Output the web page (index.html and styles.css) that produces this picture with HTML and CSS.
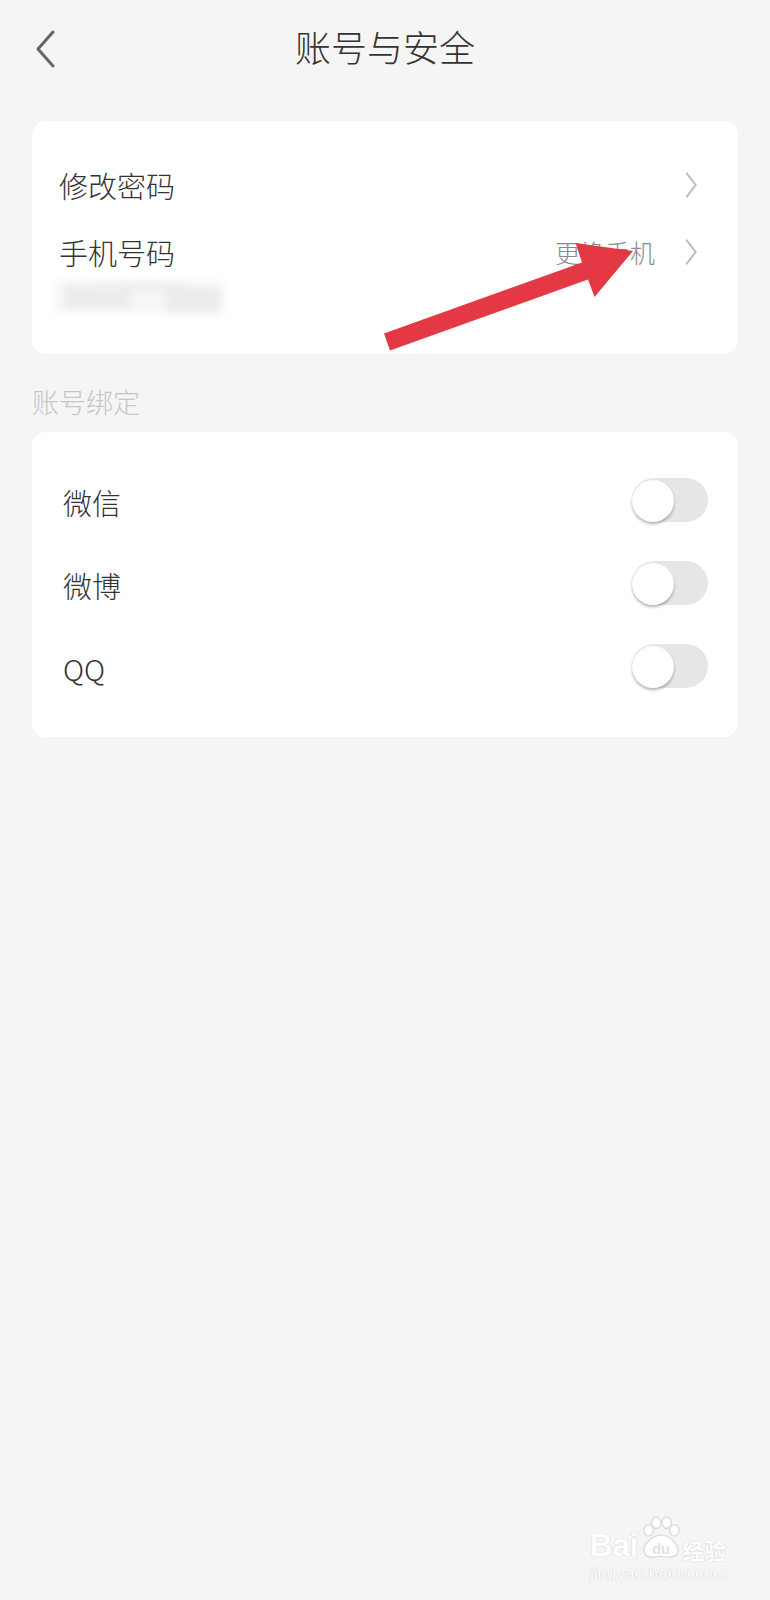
FILE: index.html
```html
<!DOCTYPE html>
<html lang="zh-CN">
<head>
  <meta charset="UTF-8" />
  <meta name="viewport" content="width=device-width, initial-scale=1.0"/>
  <title>账号与安全</title>
  <link rel="stylesheet" href="styles.css">
</head>
<body>
  <div class="page">
    <header class="topbar">
      <svg class="back" width="20" height="38" viewBox="0 0 20 38"><polyline points="18,2 3,19 18,36" fill="none" stroke="#666" stroke-width="3" stroke-linecap="round" stroke-linejoin="round"/></svg>
      <h1>账号与安全</h1>
    </header>

    <section class="card card-security">
      <div class="row">
        <span class="label">修改密码</span>
        <span class="chevron"></span>
      </div>
      <div class="row">
        <span class="label">手机号码</span>
        <span class="extra">更换手机</span>
        <span class="chevron"></span>
      </div>
      <div class="phone"><span class="blk b0"></span><span class="blk b1"></span><span class="blk b2"></span><span class="blk b3"></span></div>
    </section>

    <h2 class="section-title">账号绑定</h2>

    <section class="card card-bind">
      <div class="bind-row">
        <span class="label">微信</span>
        <span class="switch"><span class="knob"></span></span>
      </div>
      <div class="bind-row">
        <span class="label">微博</span>
        <span class="switch"><span class="knob"></span></span>
      </div>
      <div class="bind-row">
        <span class="label">QQ</span>
        <span class="switch"><span class="knob"></span></span>
      </div>
    </section>

    <!-- red arrow drawn over the screenshot -->
    <svg class="arrow" width="770" height="400" viewBox="0 0 770 400">
      <polygon points="384,333.5 582,262.5 575.5,243 633,251 594.5,297 588,279.5 390,350.5" fill="#e43845"/>
    </svg>

    <div class="watermark">
      <div class="wm-logo">
        <span class="wm-bai">Bai</span>
        <svg class="wm-paw" width="42" height="46" viewBox="0 0 44 46">
          <g fill="#fff" stroke="#dcdcdc" stroke-width="1.5">
            <ellipse cx="9" cy="15" rx="5" ry="6"/>
            <ellipse cx="17" cy="7" rx="5" ry="6"/>
            <ellipse cx="28" cy="7" rx="5" ry="6"/>
            <ellipse cx="36" cy="15" rx="5" ry="6"/>
            <path d="M22 20 C31 20 41 30 40 37 C39 44 30 44 22 42 C14 44 5 44 4 37 C3 30 13 20 22 20 Z"/>
          </g>
          <text x="22" y="40" text-anchor="middle" font-family="Liberation Sans, sans-serif" font-weight="700" font-size="15" fill="#e2e2e2">du</text>
        </svg>
        <span class="wm-jy">经验</span>
      </div>
      <div class="wm-url">jingyan.baidu.com</div>
    </div>
  </div>
</body>
</html>
```

FILE: styles.css
```css
html, body { margin: 0; padding: 0; background-color: #f5f5f5; }
body { font-family: "Noto Sans CJK SC", "Noto Sans", sans-serif; color: #333; }
.page { position: relative; width: 770px; min-height: 1600px; padding-top: 1px; box-sizing: border-box; }

.topbar { position: relative; height: 92px; display: flex; align-items: center; justify-content: center; margin-top: -1px; }
.topbar h1 { margin: 0; font-size: 36px; font-weight: 300; color: #333; line-height: 1; }
.back { position: absolute; left: 35px; top: 30px; }

.card { background-color: #fff; border-radius: 14px; margin: 0 32px; box-sizing: border-box; }
.card-security { margin-top: 29px; height: 233px; padding: 31px 40px 0 27px; }
.row { display: flex; align-items: center; height: 66px; }
.row + .row { margin-top: 1px; }
.label { font-size: 29px; font-weight: 300; line-height: 1; color: #333; flex: 1; }
.extra { font-size: 25px; font-weight: 300; color: #8a8a8a; margin-right: 30px; }
.chevron { width: 13px; height: 22px; position: relative; }
.chevron::before { content: ""; position: absolute; left: -6px; top: 3px; width: 14px; height: 14px; border-top: 2px solid #bcbcbc; border-right: 2px solid #bcbcbc; transform: rotate(45deg) skew(8deg, 8deg); }

/* blurred phone number */
.phone { position: relative; height: 36px; margin-top: -6px; margin-left: 2px; filter: blur(4px); }
.blk { position: absolute; background-color: #ececec; }
.b0 { left: -6px; top: 2px; width: 168px; height: 32px; background-color: #f7f7f7; }
.b1 { left: 4px; top: 6px; width: 66px; height: 24px; }
.b2 { left: 36px; top: 2px; width: 90px; height: 10px; background-color: #efefef; }
.b3 { left: 104px; top: 8px; width: 56px; height: 26px; }

.section-title { margin: 0; padding: 33px 0 0 32px; height: 46px; font-size: 27px; font-weight: 300; line-height: 30px; color: #c6c6c6; }

.card-bind { margin-top: -1px; height: 305px; padding: 26px 30px 0 31px; }
.bind-row { display: flex; align-items: center; height: 83px; }
.bind-row .label { padding-top: 5px; }
.switch { position: relative; width: 76px; height: 44px; border-radius: 22px; background-color: #e6e6e6; }
.knob { position: absolute; left: 0; top: 2px; width: 42px; height: 42px; border-radius: 50%; background-color: #fff; box-shadow: 0 2px 3px rgba(0,0,0,0.3); }

.arrow { position: absolute; left: 0; top: 0; pointer-events: none; }

.watermark { position: absolute; left: 590px; top: 1515px; color: #fff; }
.wm-logo { display: flex; align-items: flex-end; height: 46px; }
.wm-bai { font-family: "Liberation Sans", sans-serif; font-weight: 700; font-size: 31px; line-height: 1; color: #fff; text-shadow: 0 0 1px #cfcfcf, 0 0 1px #cfcfcf; }
.wm-paw { margin: 0 0 0 2px; }
.wm-jy { font-size: 22px; font-weight: 700; line-height: 1.1; color: #fff; text-shadow: 0 0 1px #cfcfcf, 0 0 1px #cfcfcf; }
.wm-url { font-family: "Liberation Sans", sans-serif; font-size: 17px; color: #fff; margin-top: 3px; text-shadow: 0 0 1px #cfcfcf, 0 0 1px #cfcfcf; }
```
